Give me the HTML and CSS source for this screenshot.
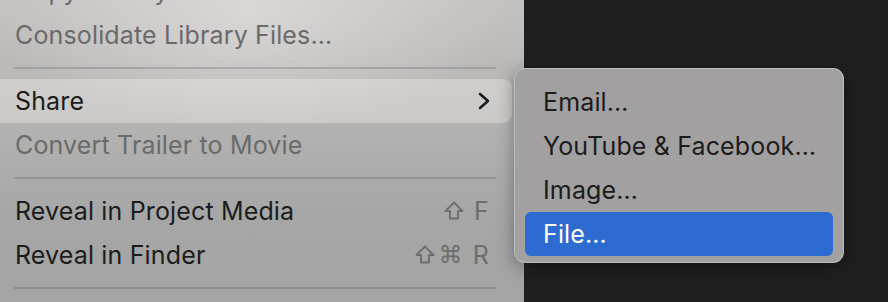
FILE: index.html
```html
<!DOCTYPE html>
<html>
<head>
    <title>File Menu</title>
    <link rel="stylesheet" href="styles.css">
</head>
<body>
    <div class="screen">
        <div class="menu">
            <div class="item disabled cut">Copy Library To</div>
            <div class="item disabled">Consolidate Library Files…</div>
            <div class="sep"></div>
            <div class="item share">
                <span>Share</span>
                <svg class="chevron" width="12" height="18" viewBox="0 0 12 18">
                    <polyline points="2,2 10,9 2,16" fill="none" stroke="#1c1c1c" stroke-width="2.6" stroke-linecap="round" stroke-linejoin="round"/>
                </svg>
            </div>
            <div class="item disabled">Convert Trailer to Movie</div>
            <div class="sep"></div>
            <div class="item">
                <span>Reveal in Project Media</span>
                <span class="keys">
                    <svg class="shift" width="20" height="19" viewBox="0 0 20 19">
                        <path d="M10 1.5 L18.5 10 H14 V17.5 H6 V10 H1.5 Z" fill="none" stroke="#6d6d6d" stroke-width="1.8" stroke-linejoin="round"/>
                    </svg>
                    <span class="key">F</span>
                </span>
            </div>
            <div class="item">
                <span>Reveal in Finder</span>
                <span class="keys">
                    <svg class="shift" width="20" height="19" viewBox="0 0 20 19">
                        <path d="M10 1.5 L18.5 10 H14 V17.5 H6 V10 H1.5 Z" fill="none" stroke="#6d6d6d" stroke-width="1.8" stroke-linejoin="round"/>
                    </svg>
                    <span class="sym">⌘</span>
                    <span class="key">R</span>
                </span>
            </div>
            <div class="sep"></div>
        </div>
        <div class="desk"></div>

        <div class="submenu">
            <div class="sub-item">Email…</div>
            <div class="sub-item">YouTube &amp; Facebook…</div>
            <div class="sub-item">Image…</div>
            <div class="sub-item selected">File…</div>
        </div>
    </div>
</body>
</html>
```

FILE: styles.css
```css
* { box-sizing: border-box; }

body {
    margin: 0;
    background: #1f1f1f;
    font-family: Inter, "Noto Sans", sans-serif;
    color: #1c1c1c;
}

.screen {
    position: relative;
    display: flex;
    width: 888px;
    height: 302px;
    overflow: hidden;
}

.menu {
    width: 524px;
    flex-shrink: 0;
    background:
        radial-gradient(ellipse 260px 120px at 250px 40px, rgba(220,217,215,0.9), rgba(220,217,215,0) 100%),
        linear-gradient(180deg, #c4c2c1 30px, #b4b3b2 150px, #a6a6a6 250px, #a4a4a4 333px);
    margin-top: -31px;
    height: 333px;
}

.desk {
    flex: 1;
    background: #1f1f1f;
}

.item {
    display: flex;
    justify-content: space-between;
    align-items: center;
    height: 44px;
    padding: 0 35px 0 15px;
    font-size: 25px;
    letter-spacing: 0.15px;
    white-space: nowrap;
}

.item.disabled {
    color: #6b6a6a;
}

.item.share {
    margin-right: 12px;
    padding-right: 22px;
    background: rgba(240,238,236,0.4);
    border-radius: 0 9px 9px 0;
}

.chevron {
    display: block;
}

.keys {
    display: flex;
    align-items: center;
    gap: 4px;
    color: #6d6d6d;
    font-size: 25px;
}

.shift {
    display: block;
    margin-top: -2px;
}

.sym {
    font-family: "DejaVu Sans", sans-serif;
    font-size: 24px;
}

.key {
    margin-left: 6px;
}

.sep {
    height: 22px;
    padding: 10px 28px 10px 14px;
}

.sep::after {
    content: "";
    display: block;
    height: 2px;
    background: rgba(90,90,90,0.28);
}

.submenu {
    position: absolute;
    left: 514px;
    top: 68px;
    width: 330px;
    height: 195px;
    padding: 11px 10px 8px;
    background: #a2a0a0;
    border: 1px solid rgba(210,210,210,0.55);
    border-radius: 11px;
    box-shadow: 0 4px 18px rgba(0,0,0,0.35);
}

.sub-item {
    display: flex;
    align-items: center;
    height: 44px;
    padding-left: 18px;
    font-size: 25px;
    letter-spacing: 0.15px;
    white-space: nowrap;
    border-radius: 6px;
}

.sub-item.selected {
    background: #2c6bcf;
    color: white;
}
```
